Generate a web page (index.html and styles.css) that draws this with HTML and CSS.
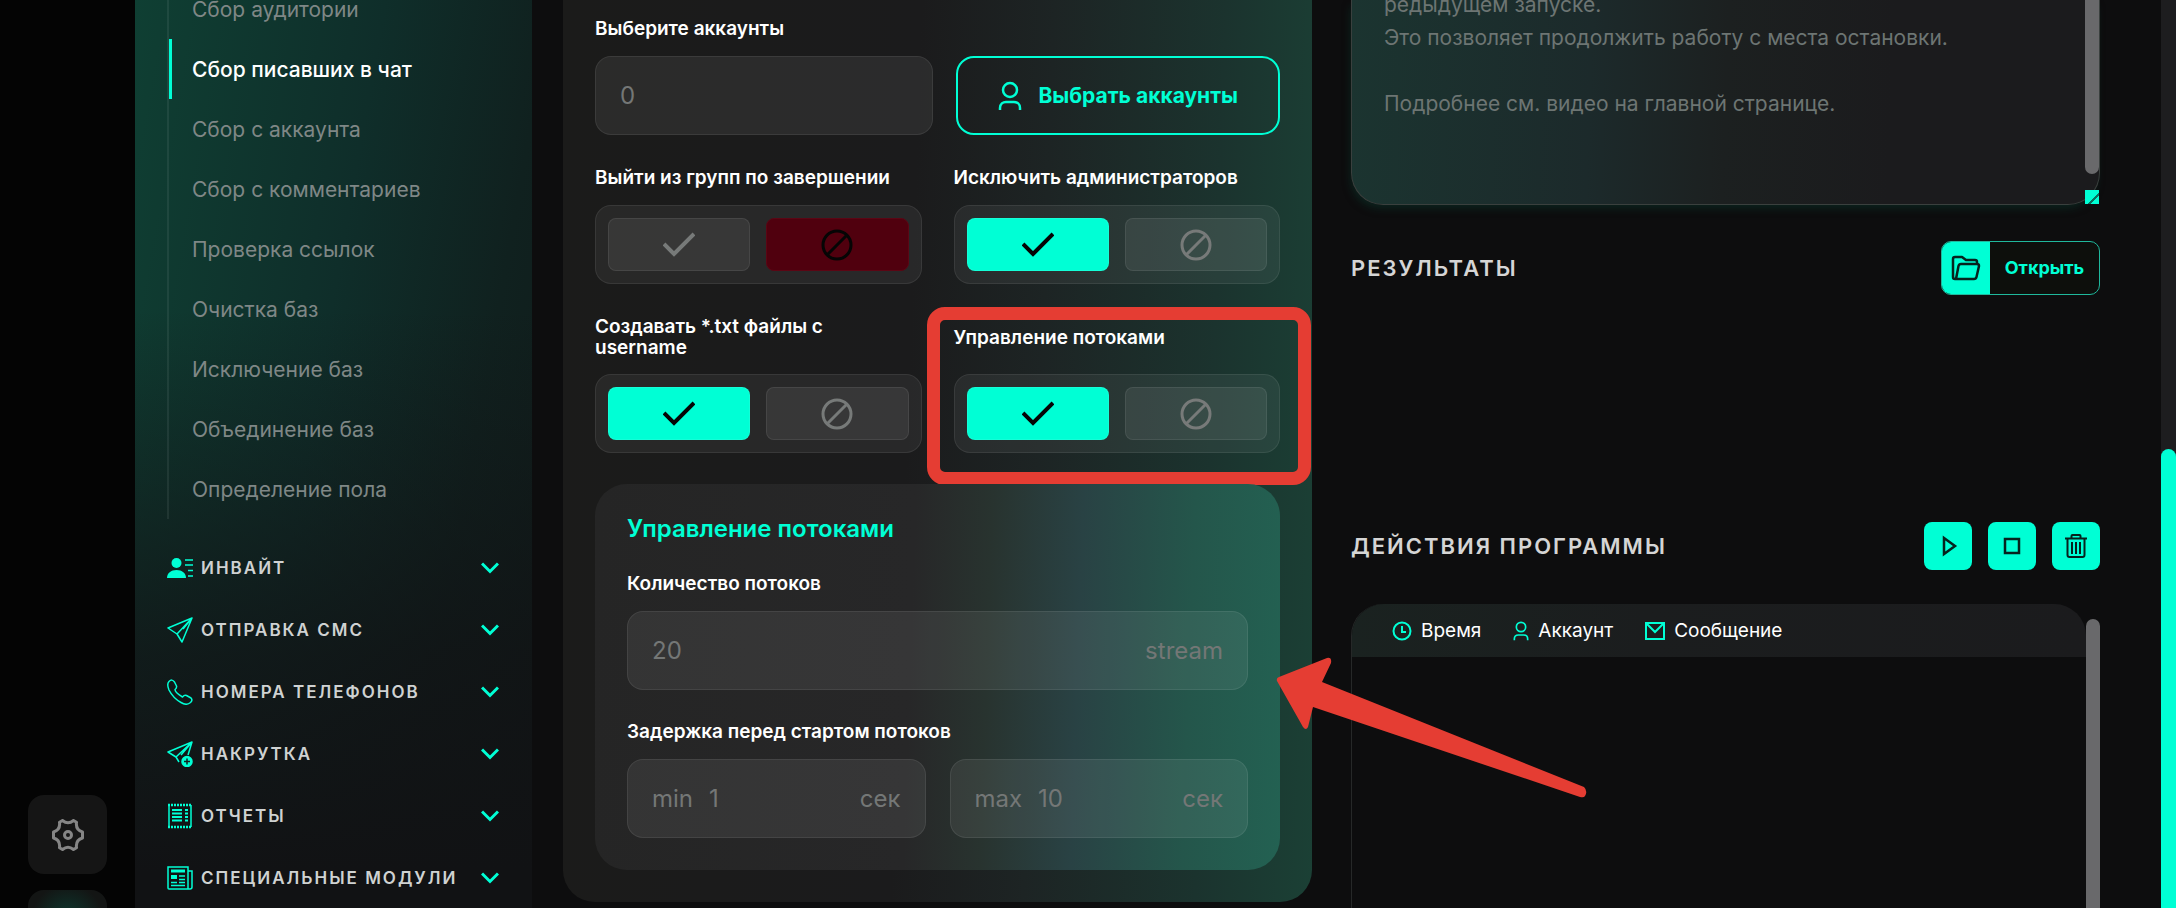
FILE: index.html
```html
<!DOCTYPE html>
<html lang="ru">
<head>
<meta charset="utf-8">
<title>Сбор писавших в чат</title>
<link rel="stylesheet" href="styles.css">
</head>
<body>
<svg class="sprite" aria-hidden="true">
  <symbol id="i-check" viewBox="0 0 32 32"><path d="M1 15l10 10L31 5" fill="none" stroke="currentColor" stroke-width="4"/></symbol>
  <symbol id="i-ban" viewBox="0 0 32 32"><g fill="none" stroke="currentColor" stroke-width="3"><circle cx="16" cy="16" r="14"/><path d="M6 26L26 6"/></g></symbol>
  <symbol id="i-chev" viewBox="0 0 18 12"><path d="M1 1.500l8 8 8-8" fill="none" stroke="currentColor" stroke-width="3"/></symbol>
  <symbol id="i-user" viewBox="0 0 24 30"><g fill="none" stroke="currentColor" stroke-width="2.500"><circle cx="12" cy="9" r="7"/><path d="M2 29v-2c0-4 3-6 6-6h8c3 0 6 2 6 6v2"/></g></symbol>
  <symbol id="i-plane" viewBox="0 0 26 26"><g fill="none" stroke="currentColor" stroke-width="1.500" stroke-linejoin="round"><path d="M25 1L1 11l9 6 5 8zM25 1L10 17M25 1l-9 11"/></g></symbol>
</svg>
<div class="app">
  <nav class="rail" aria-label="Инструменты">
    <button class="rail-btn" type="button" aria-label="Настройки">
      <svg width="32" height="32" viewBox="0 0 32 32" fill="none" stroke="currentColor" stroke-width="3" stroke-linejoin="round"><path d="M10.500 1.500Q16 6 21.500 1.500l3 1.800Q23.500 11 30.500 13v6Q23.500 21 24.500 28.700l-3 1.800q-5.500-4.500-11 0l-3-1.800Q8.500 21 1.500 19v-6Q8.500 11 7.500 3.300z"/><circle cx="16" cy="16" r="3.500"/></svg>
    </button>
    <button class="rail-btn rail-glow" type="button" aria-label="Профиль"></button>
  </nav>

  <aside class="sidebar">
    <ul class="sub">
      <li><a href="#">Сбор аудитории</a></li>
      <li><a href="#" class="active" aria-current="page">Сбор писавших в чат</a></li>
      <li><a href="#">Сбор с аккаунта</a></li>
      <li><a href="#">Сбор с комментариев</a></li>
      <li><a href="#">Проверка ссылок</a></li>
      <li><a href="#">Очистка баз</a></li>
      <li><a href="#">Исключение баз</a></li>
      <li><a href="#">Объединение баз</a></li>
      <li><a href="#">Определение пола</a></li>
    </ul>
    <div class="groups">
      <button class="group" type="button">
        <svg class="gi" viewBox="0 0 26 26"><g fill="currentColor"><circle cx="9.500" cy="8" r="5"/><path d="M0 23c0-5 4-8 9.500-8s9.500 3 9.500 8z"/></g><path d="M18 5h8M18 10h8M21 15.500h5M21 21h5" stroke="currentColor" stroke-width="1.500"/></svg>
        <span>ИНВАЙТ</span><svg class="chev"><use href="#i-chev"/></svg>
      </button>
      <button class="group" type="button">
        <svg class="gi"><use href="#i-plane"/></svg>
        <span>ОТПРАВКА СМС</span><svg class="chev"><use href="#i-chev"/></svg>
      </button>
      <button class="group" type="button">
        <svg class="gi" viewBox="0 0 26 26" fill="none" stroke="currentColor" stroke-width="1.500" stroke-linejoin="round"><path d="M2 2.500Q5-.5 7.500 3l2 4Q10 9 8 10.500q0 3 7.500 7.500 2-2.500 4-1.500l4.500 2.500q2 2-.5 4.500-4 3.500-9.500 0Q6 19 2 11-.5 5 2 2.500z"/></svg>
        <span>НОМЕРА ТЕЛЕФОНОВ</span><svg class="chev"><use href="#i-chev"/></svg>
      </button>
      <button class="group" type="button">
        <svg class="gi" viewBox="0 0 26 26" fill="none" stroke="currentColor" stroke-width="1.500" stroke-linejoin="round"><path d="M12 21l-3-5-8-5L25 1l-4 13M25 1L9 16M25 1L14 14"/><circle cx="20" cy="20.500" r="5" fill="currentColor"/><path d="M20 17.500v6M17 20.500h6" class="cut"/></svg>
        <span>НАКРУТКА</span><svg class="chev"><use href="#i-chev"/></svg>
      </button>
      <button class="group" type="button">
        <svg class="gi" viewBox="0 0 26 26" fill="none" stroke="currentColor" stroke-width="1.500"><path d="M2 2v22M24 2v22"/><path d="M1 2h24M1 24h24" stroke-width="2.500" stroke-dasharray="2 1"/><path d="M5 7h10M5 10.500h10M5 14h10M5 17.500h10M18 7h3M18 10.500h3M18 14h3M18 17.500h3" stroke-width="2"/></svg>
        <span>ОТЧЕТЫ</span><svg class="chev"><use href="#i-chev"/></svg>
      </button>
      <button class="group" type="button">
        <svg class="gi" viewBox="0 0 26 26" fill="none" stroke="currentColor" stroke-width="1.500"><path d="M1 2h20v22H2q-1 0-1-1zM21 6h4v16q0 2-2 2h-3"/><path d="M4 6h14" stroke-width="3"/><path d="M4 12h6" stroke-width="4"/><path d="M12 11h6M12 14.500h6M4 17.500h6M12 17.500h6M4 20.500h14"/></svg>
        <span>СПЕЦИАЛЬНЫЕ МОДУЛИ</span><svg class="chev"><use href="#i-chev"/></svg>
      </button>
    </div>
  </aside>

  <main class="content">
    <form class="panel">
      <div class="field">
        <label class="label" for="acc">Выберите аккаунты</label>
        <div class="pick">
          <div class="box"><input id="acc" type="text" placeholder="0"></div>
          <button class="outline" type="button"><svg class="user-lg"><use href="#i-user"/></svg>Выбрать аккаунты</button>
        </div>
      </div>
      <div class="toggles">
        <fieldset class="field">
          <legend class="label">Выйти из групп по завершении</legend>
          <div class="switch">
            <button type="button" aria-label="Да"><svg><use href="#i-check"/></svg></button>
            <button type="button" class="off" aria-label="Нет" aria-pressed="true"><svg><use href="#i-ban"/></svg></button>
          </div>
        </fieldset>
        <fieldset class="field">
          <legend class="label">Исключить администраторов</legend>
          <div class="switch">
            <button type="button" class="on" aria-label="Да" aria-pressed="true"><svg><use href="#i-check"/></svg></button>
            <button type="button" aria-label="Нет"><svg><use href="#i-ban"/></svg></button>
          </div>
        </fieldset>
        <fieldset class="field">
          <legend class="label tall">Создавать *.txt файлы с username</legend>
          <div class="switch">
            <button type="button" class="on" aria-label="Да" aria-pressed="true"><svg><use href="#i-check"/></svg></button>
            <button type="button" aria-label="Нет"><svg><use href="#i-ban"/></svg></button>
          </div>
        </fieldset>
        <fieldset class="field marked">
          <legend class="label tall">Управление потоками</legend>
          <div class="switch">
            <button type="button" class="on" aria-label="Да" aria-pressed="true"><svg><use href="#i-check"/></svg></button>
            <button type="button" aria-label="Нет"><svg><use href="#i-ban"/></svg></button>
          </div>
        </fieldset>
      </div>
      <section class="threads">
        <h2>Управление потоками</h2>
        <div class="field">
          <label class="label" for="cnt">Количество потоков</label>
          <div class="box"><input id="cnt" type="text" placeholder="20"><span>stream</span></div>
        </div>
        <div class="field">
          <label class="label" for="dmin">Задержка перед стартом потоков</label>
          <div class="range">
            <div class="box"><span>min</span><input id="dmin" type="text" placeholder="1"><span>сек</span></div>
            <div class="box"><label for="dmax">max</label><input id="dmax" type="text" placeholder="10"><span>сек</span></div>
          </div>
        </div>
        <svg class="arrow" viewBox="0 0 312 142" aria-hidden="true"><path d="M4 20L52 1q5-1 4 5l-9 19 262 105q4 4 1 9-1 2-5 1L38 50l-5 20q-2 4-5 0L2 24q-1-3 2-4z"/></svg>
      </section>
    </form>

    <section class="right">
      <div class="desc">
        <p>редыдущем запуске.<br>Это позволяет продолжить работу с места остановки.<br><br>Подробнее см. видео на главной странице.</p>
        <i class="thumb"></i><i class="grip"></i>
      </div>
      <div class="head results">
        <h3>РЕЗУЛЬТАТЫ</h3>
        <button class="open" type="button"><span class="open-ic"><svg width="30" height="26" viewBox="0 0 30 26" fill="none" stroke="currentColor" stroke-width="2.500" stroke-linejoin="round"><path d="M26 9V7q0-2-2-2h-9l-4-3H4Q2 2 2 4v18q0 2 2 2h19q2 0 2.500-2L28 11q0-2-2-2H10q-2 0-2.500 2L5 24"/></svg></span><span class="open-tx">Открыть</span></button>
      </div>
      <div class="head actions">
        <h3>ДЕЙСТВИЯ ПРОГРАММЫ</h3>
        <div class="btns">
          <button type="button" aria-label="Запустить"><svg width="24" height="24" viewBox="0 0 24 24" fill="none" stroke="currentColor" stroke-width="2.500"><path d="M8 4l11 8-11 8z"/></svg></button>
          <button type="button" aria-label="Остановить"><svg width="24" height="24" viewBox="0 0 24 24" fill="none" stroke="currentColor" stroke-width="2.500"><path d="M5 5h14v14H5z"/></svg></button>
          <button type="button" aria-label="Очистить"><svg width="24" height="24" viewBox="0 0 24 24" fill="none" stroke="currentColor" stroke-width="2"><path d="M1 4.500h22M7.500 4V2q0-1 1-1h7q1 0 1 1v2M3.500 5v16q0 2 2 2h13q2 0 2-2V5M8 8v12M12 8v12M16 8v12"/></svg></button>
        </div>
      </div>
      <div class="log">
        <div class="log-head">
          <span><svg width="20" height="20" viewBox="0 0 20 20" fill="none" stroke="currentColor" stroke-width="2"><circle cx="10" cy="10" r="8.500"/><path d="M10 5v6h4"/></svg>Время</span>
          <span><svg width="16" height="20"><use href="#i-user"/></svg>Аккаунт</span>
          <span><svg width="20" height="20" viewBox="0 0 20 20" fill="none" stroke="currentColor" stroke-width="2"><path d="M1 2h18v16H1zM2 3l8 8 8-8"/></svg>Сообщение</span>
        </div>
        <i class="thumb"></i>
      </div>
    </section>
  </main>
  <div class="page-scroll"><i></i></div>
</div>
</body>
</html>
```

FILE: styles.css
```css
* { box-sizing: border-box; }
:root { --mint: #00ffd5; --red: #e53d33; --line: rgba(255,255,255,.08); }
body {
  margin: 0; height: 100vh; overflow: hidden;
  background: #0d0d0e; color: #fff;
  font-family: Inter, "Noto Sans", sans-serif; font-size: 21px;
}
button, input { font: inherit; color: inherit; }
button { padding: 0; border: 0; cursor: pointer; }
h2, h3, p, ul { margin: 0; padding: 0; }
fieldset { margin: 0; padding: 0; border: 0; min-width: 0; }
legend { padding: 0; }
.sprite { position: absolute; width: 0; height: 0; }
.app { display: flex; height: 100vh; overflow: hidden; }

.rail {
  flex: 0 0 135px; background: #040404; overflow: hidden;
  display: flex; flex-direction: column; align-items: center;
  gap: 16px; padding-top: 795px;
}
.rail-btn {
  flex: none; width: 79px; height: 79px; border-radius: 16px;
  background: #151515; color: #858585; display: grid; place-items: center;
}
.rail-glow { background: radial-gradient(circle at 50% 30px, #0d3a30, #131514 36px); }

.sidebar {
  flex: 0 0 397px; overflow: hidden;
  background:
    linear-gradient(180deg, rgba(17,19,21,0) 34%, rgba(17,18,20,.75) 72%, #111214 96%),
    linear-gradient(100deg, #0f3f33 0%, #0f2e2a 45%, #10211f 75%, #101b1a 100%);
}
.sub { list-style: none; margin: -21px 0 0 32px; border-left: 2px solid rgba(255,255,255,.07); }
.sub a {
  display: flex; align-items: center; height: 60px; padding-left: 20px;
  border-left: 3px solid transparent; color: #7f8786; text-decoration: none;
}
.sub .active { border-left-color: var(--mint); color: #fff; font-weight: 500; }
.groups { padding: 18px 33px 0 32px; }
.group {
  display: flex; align-items: center; width: 100%; height: 62px;
  background: none; color: #cfd2d2; text-align: left;
  font-weight: 600; font-size: 17px; letter-spacing: 2px;
}
.group span { flex: 1; white-space: nowrap; }
.gi { width: 26px; height: 26px; margin-right: 8px; color: var(--mint); }
.cut { stroke: #10201f; }
.chev { width: 18px; height: 12px; color: var(--mint); }

.content {
  flex: 1; min-width: 0; display: grid; grid-template-columns: 1fr 1fr; align-items: start;
  gap: 39px; padding: 0 61px 0 31px;
}
.panel {
  position: relative; z-index: 1;
  min-width: 0; padding: 18px 32px 32px;
  border-radius: 0 0 32px 32px;
  background: linear-gradient(92deg, #1b1b1a 0%, #1b1b1c 46%, #1d2424 63%, #1b332e 85%, #1b4035 100%);
}
.label { display: block; font-weight: 600; font-size: 19px; line-height: 22px; }
.field .label { margin-bottom: 16px; }
.pick { display: grid; grid-template-columns: 339fr 324fr; gap: 23px; }
.box {
  display: flex; align-items: center; gap: 16px; height: 79px; padding: 0 24px;
  border: 1px solid var(--line); border-radius: 16px;
  background: rgba(255,255,255,.07); color: #747776; font-size: 24px;
}
.box input { flex: 1; min-width: 0; width: 0; padding: 0; border: 0; outline: 0; background: none; }
.box input::placeholder { color: inherit; opacity: 1; }
.outline {
  display: flex; align-items: center; justify-content: center; gap: 16px;
  border: 2px solid var(--mint); border-radius: 18px; background: none;
  color: var(--mint); font-weight: 700; white-space: nowrap;
}
.user-lg { width: 24px; height: 30px; }
.toggles { display: grid; grid-template-columns: 1fr 1fr; gap: 32px; margin: 32px 0 31px; }
.field .tall { display: flex; align-items: center; width: 270px; height: 42px; line-height: 21px; }
.switch {
  display: grid; grid-template-columns: 1fr 1fr; gap: 16px; height: 79px; padding: 12px;
  border: 1px solid var(--line); border-radius: 16px; background: rgba(255,255,255,.06);
}
.switch button {
  display: grid; place-items: center; border: 1px solid var(--line); border-radius: 8px;
  background: rgba(255,255,255,.07); color: #777a79;
}
.switch svg { width: 32px; height: 32px; }
.switch .on { background: var(--mint); color: #050505; }
.switch .off { background: #50000e; color: #050505; border-color: #5b0614; }
.marked { position: relative; }
.marked::after {
  content: ""; position: absolute; inset: -67px -31px -32px -27px;
  border: 13px solid var(--red); border-radius: 18px; pointer-events: none;
}

.threads {
  position: relative; display: grid; gap: 31px; padding: 32px;
  border-radius: 32px;
  background: linear-gradient(92deg, #252525 0%, #272728 46%, #28332f 57%, #294244 70%, #24564b 86%, #236152 100%);
}
.threads h2 { color: var(--mint); font-size: 24px; line-height: 26px; font-weight: 600; }
.range { display: grid; grid-template-columns: 1fr 1fr; gap: 24px; }
.arrow { position: absolute; left: calc(100% - 5px); top: 173px; width: 312px; height: 142px; fill: var(--red); }

.right { min-width: 0; height: 100vh; display: flex; flex-direction: column; }
.desc {
  flex: none; position: relative; height: 205px; padding: 0 32px;
  border: 1px solid #3a403e; border-top: 0; border-radius: 0 0 32px 32px;
  background: linear-gradient(92deg, #1b3430 0%, #1c2a2b 32%, #1c2020 50%, #1b1b1d 72%);
  color: #6d7573; line-height: 33px; box-shadow: -2px 5px 8px -2px rgba(10,60,48,.5);
}
.desc p { margin-top: -12px; }
.thumb { position: absolute; right: 0; width: 14px; background: #69696b; }
.desc .thumb { top: 0; height: 174px; border-radius: 0 0 7px 7px; }
.grip { position: absolute; right: 0; bottom: 0; width: 14px; height: 14px; background: linear-gradient(135deg, var(--mint) 60%, #08705f 60%, #08705f 70%, var(--mint) 70%); }
.head { flex: none; display: flex; align-items: center; justify-content: space-between; }
.head h3 { font-size: 22px; line-height: 26px; font-weight: 600; letter-spacing: 2px; color: #d5d5d5; }
.results { margin-top: 36px; }
.actions { margin-top: 227px; }
.open {
  display: flex; width: 159px; height: 54px; overflow: hidden;
  border: 1px solid #1fb89c; border-radius: 10px; background: #0d0f0c; color: var(--mint);
}
.open-ic { width: 48px; height: 52px; display: grid; place-items: center; background: var(--mint); color: #06231e; }
.open-tx { flex: 1; line-height: 52px; font-size: 18px; font-weight: 700; }
.btns { display: flex; gap: 16px; }
.btns button { width: 48px; height: 48px; border-radius: 8px; display: grid; place-items: center; background: var(--mint); color: #06231e; }
.log { position: relative; flex: 1; margin-top: 34px; border-left: 1px solid #262828; border-radius: 32px 32px 0 0; }
.log-head {
  display: flex; align-items: center; gap: 32px; height: 53px; margin-right: 14px; padding-left: 40px;
  border-radius: 32px 32px 0 0; font-size: 19px;
  background: linear-gradient(90deg, #1a2220, #1b1d1e 40%, #1b1b1d);
}
.log-head span { display: flex; align-items: center; gap: 9px; }
.log-head svg { color: var(--mint); }
.log .thumb { top: 15px; bottom: 0; border-radius: 7px 7px 0 0; }
.page-scroll { flex: 0 0 15px; background: #1d1d1f; display: flex; align-items: flex-end; }
.page-scroll i { width: 100%; height: 459px; background: var(--mint); border-radius: 8px 8px 0 0; }
```
